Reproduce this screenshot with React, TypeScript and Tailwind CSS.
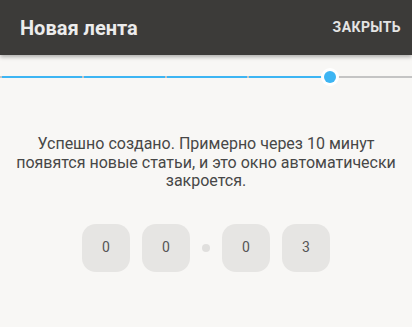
import React from "react";

const STEPS = 5;
const CURRENT = 4;
const DIGITS = ["0", "0", "0", "3"];

function Digit({ value }: { value: string }) {
  return (
    <div className="w-12 h-12 rounded-[14px] bg-[#e6e5e3] flex items-center justify-center text-[14px] text-[#555]">
      {value}
    </div>
  );
}

export default function App() {
  return (
    <div className="w-[412px] h-[327px] bg-[#f8f7f5] flex flex-col overflow-hidden" style={{ fontFamily: "Roboto, 'Noto Sans', sans-serif" }}>
      <header className="h-[55px] bg-[#3c3b39] flex items-center justify-between pl-5 pr-[11px] shadow-[0_2px_4px_rgba(0,0,0,0.3)] relative z-10">
        <h1 className="text-[20px] font-bold text-[#ececec]">Новая лента</h1>
        <button type="button" className="text-[14px] font-bold tracking-[0.4px] text-[#e4e4e4]">ЗАКРЫТЬ</button>
      </header>

      <div className="mt-[20px] h-[4px] flex items-center">
        {Array.from({ length: STEPS }).map((_, i) => (
          <div key={i} className="flex-1 h-[2px] flex relative">
            <div className="w-[2px] h-full bg-[#c4c4c4]" />
            <div className={i < CURRENT ? "flex-1 bg-[#3db5f3]" : "flex-1 bg-[#c4c4c4]"} />
            {i === CURRENT && (
              <div className="absolute -left-[9px] -top-[8px] w-[18px] h-[18px] rounded-full bg-white flex items-center justify-center">
                <div className="w-3 h-3 rounded-full bg-[#3db5f3]" />
              </div>
            )}
          </div>
        ))}
      </div>

      <p className="mt-[56px] px-4 text-center text-[16px] leading-[18.5px] text-[#474747]">
        Успешно создано. Примерно через 10 минут появятся новые статьи, и это окно автоматически закроется.
      </p>

      <div className="mt-[33px] flex items-center justify-center gap-3">
        <Digit value={DIGITS[0]} />
        <Digit value={DIGITS[1]} />
        <div className="w-2 h-2 rounded-full bg-[#e0dfdd]" />
        <Digit value={DIGITS[2]} />
        <Digit value={DIGITS[3]} />
      </div>
    </div>
  );
}
